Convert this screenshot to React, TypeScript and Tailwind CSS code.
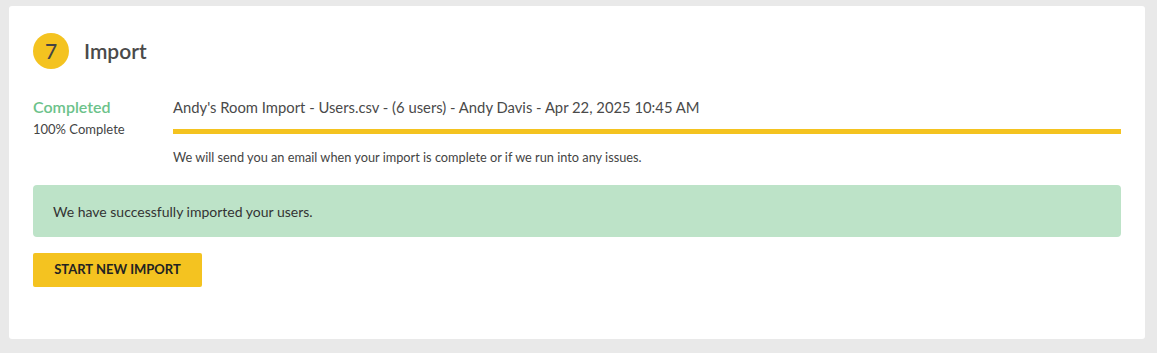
export default function App() {
  return (
    <div
      className="min-h-[353px] bg-[#e9e9e9] pt-[6px] pl-[9px] pr-[12px] pb-[14px]"
      style={{ fontFamily: "Lato, 'Open Sans', sans-serif" }}
    >
      <div className="h-[333px] rounded-[3px] bg-white px-[24px] pt-[27px]">
        <div className="flex items-center gap-[15px]">
          <div className="flex h-[36px] w-[36px] items-center justify-center rounded-full bg-[#f4c320] text-[21px] font-medium text-[#444]">
            7
          </div>
          <h2 className="text-[21px] font-semibold text-[#4a4a4a]">Import</h2>
        </div>

        <div className="mt-[28px] flex">
          <div className="w-[140px] shrink-0">
            <div className="text-[16px] font-semibold leading-[20px] text-[#6cc28a]">Completed</div>
            <div className="mt-[4px] text-[13px] leading-[16px] text-[#444]">100% Complete</div>
          </div>
          <div className="flex-1">
            <div className="text-[14.8px] leading-[20px] text-[#4a4a4a]">
              Andy's Room Import - Users.csv - (6 users) - Andy Davis - Apr 22, 2025 10:45 AM
            </div>
            <div className="mt-[12px] h-[5px] w-full bg-[#f4c320]" />
            <div className="mt-[15px] text-[12.75px] leading-[16px] text-[#444]">
              We will send you an email when your import is complete or if we run into any issues.
            </div>
          </div>
        </div>

        <div className="mt-[20px] flex h-[52px] items-center rounded-[4px] bg-[#bde3c8] px-[20px] text-[14px] text-[#333]">
          We have successfully imported your users.
        </div>

        <button className="mt-[16px] flex h-[34px] w-[169px] items-center justify-center rounded-[2px] bg-[#f4c320] text-[13px] font-bold text-[#222]">
          START NEW IMPORT
        </button>
      </div>
    </div>
  );
}
